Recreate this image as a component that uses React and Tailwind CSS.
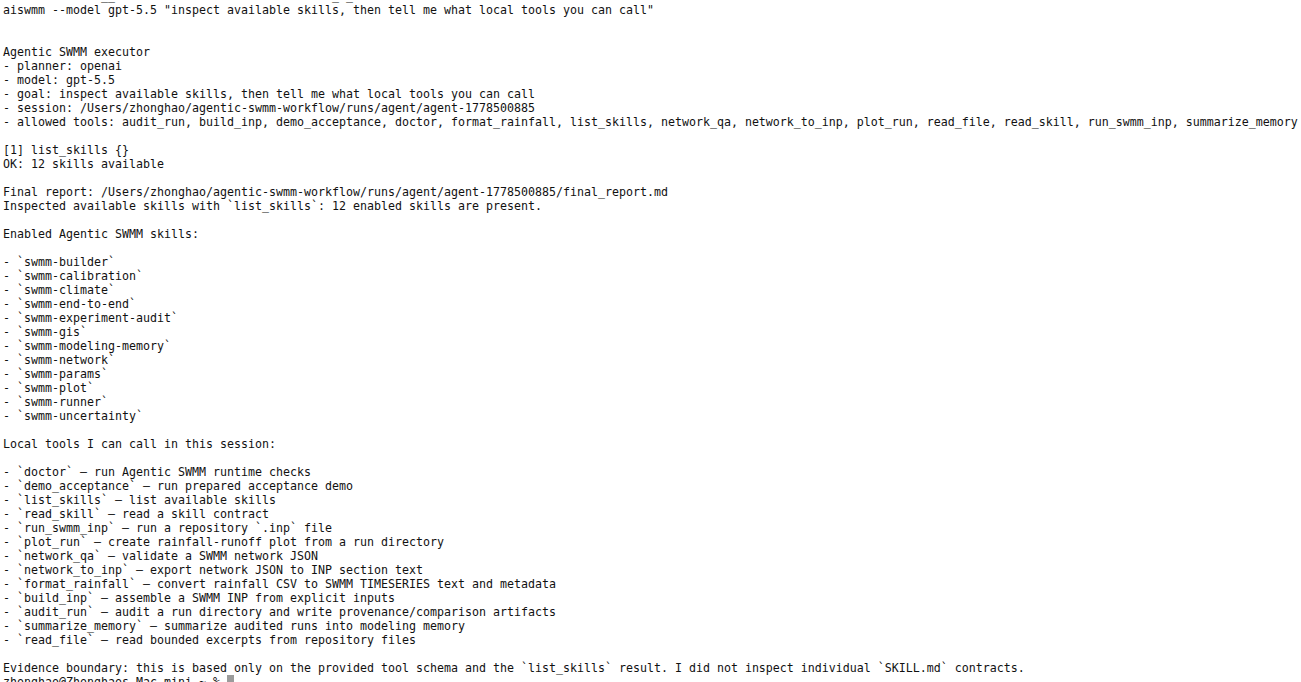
import React from "react";

const lines = [
  'aiswmm --model gpt-5.5 "inspect available skills, then tell me what local tools you can call"',
  "",
  "",
  "Agentic SWMM executor",
  "- planner: openai",
  "- model: gpt-5.5",
  "- goal: inspect available skills, then tell me what local tools you can call",
  "- session: /Users/zhonghao/agentic-swmm-workflow/runs/agent/agent-1778500885",
  "- allowed tools: audit_run, build_inp, demo_acceptance, doctor, format_rainfall, list_skills, network_qa, network_to_inp, plot_run, read_file, read_skill, run_swmm_inp, summarize_memory",
  "",
  "[1] list_skills {}",
  "OK: 12 skills available",
  "",
  "Final report: /Users/zhonghao/agentic-swmm-workflow/runs/agent/agent-1778500885/final_report.md",
  "Inspected available skills with `list_skills`: 12 enabled skills are present.",
  "",
  "Enabled Agentic SWMM skills:",
  "",
  "- `swmm-builder`",
  "- `swmm-calibration`",
  "- `swmm-climate`",
  "- `swmm-end-to-end`",
  "- `swmm-experiment-audit`",
  "- `swmm-gis`",
  "- `swmm-modeling-memory`",
  "- `swmm-network`",
  "- `swmm-params`",
  "- `swmm-plot`",
  "- `swmm-runner`",
  "- `swmm-uncertainty`",
  "",
  "Local tools I can call in this session:",
  "",
  "- `doctor` \u2014 run Agentic SWMM runtime checks",
  "- `demo_acceptance` \u2014 run prepared acceptance demo",
  "- `list_skills` \u2014 list available skills",
  "- `read_skill` \u2014 read a skill contract",
  "- `run_swmm_inp` \u2014 run a repository `.inp` file",
  "- `plot_run` \u2014 create rainfall-runoff plot from a run directory",
  "- `network_qa` \u2014 validate a SWMM network JSON",
  "- `network_to_inp` \u2014 export network JSON to INP section text",
  "- `format_rainfall` \u2014 convert rainfall CSV to SWMM TIMESERIES text and metadata",
  "- `build_inp` \u2014 assemble a SWMM INP from explicit inputs",
  "- `audit_run` \u2014 audit a run directory and write provenance/comparison artifacts",
  "- `summarize_memory` \u2014 summarize audited runs into modeling memory",
  "- `read_file` \u2014 read bounded excerpts from repository files",
  "",
  "Evidence boundary: this is based only on the provided tool schema and the `list_skills` result. I did not inspect individual `SKILL.md` contracts.",
];

export default function App() {
  return (
    <div
      className="w-[1301px] h-[682px] overflow-hidden bg-white text-[#111111] pl-[3px] text-[11.63px] leading-[14px] flex flex-col"
      style={{ fontFamily: '"DejaVu Sans Mono", "Liberation Mono", monospace' }}
    >
      <div className="h-[3px] shrink-0 overflow-hidden flex flex-col justify-end">
        <div className="h-[14px] shrink-0 whitespace-pre">
          {"              __                               _ _"}
        </div>
      </div>
      {lines.map((l, i) => (
        <div key={i} className="h-[14px] shrink-0 whitespace-pre">
          {l}
        </div>
      ))}
      <div className="h-[14px] shrink-0 whitespace-pre flex items-center">
        <span>{"zhonghao@Zhonghaos-Mac-mini ~ % "}</span>
        <span className="inline-block w-[7px] h-[14px] bg-[#9b9b9b]" />
      </div>
    </div>
  );
}
